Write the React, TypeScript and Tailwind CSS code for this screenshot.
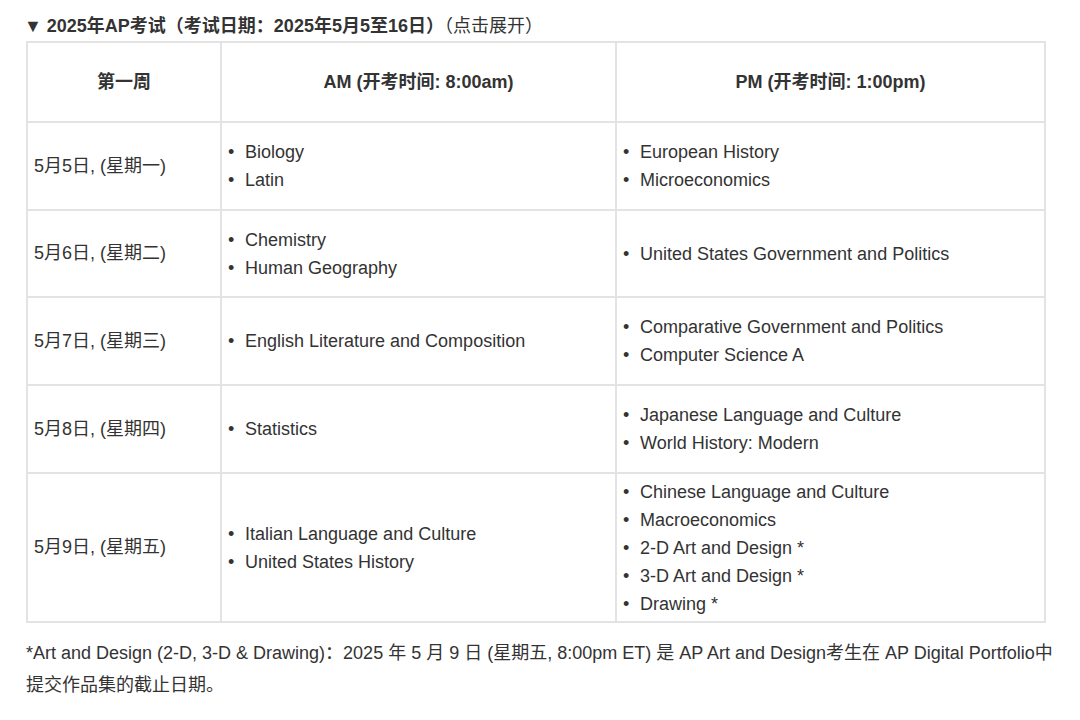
const rows: [string, string[], string[], string][] = [
  ['5月5日, (星期一)', ['Biology', 'Latin'], ['European History', 'Microeconomics'], 'h-[88px]'],
  ['5月6日, (星期二)', ['Chemistry', 'Human Geography'], ['United States Government and Politics'], 'h-[87px]'],
  ['5月7日, (星期三)', ['English Literature and Composition'], ['Comparative Government and Politics', 'Computer Science A'], 'h-[88px]'],
  ['5月8日, (星期四)', ['Statistics'], ['Japanese Language and Culture', 'World History: Modern'], 'h-[88px]'],
  ['5月9日, (星期五)', ['Italian Language and Culture', 'United States History'], ['Chinese Language and Culture', 'Macroeconomics', '2-D Art and Design *', '3-D Art and Design *', 'Drawing *'], 'h-[149px]'],
];

function List({ items }: { items: string[] }) {
  return (
    <ul>
      {items.map((t) => (
        <li key={t} className="flex leading-[28px]">
          <span className="w-[18px] shrink-0 pl-[1px]">•</span>
          {t}
        </li>
      ))}
    </ul>
  );
}

export default function App() {
  return (
    <div className="w-[1080px] h-[720px] bg-white text-[#333] text-[18px] px-[26px] pt-[12px] font-[Liberation_Sans,Noto_Sans_CJK_SC,sans-serif]">
      <div className="font-bold leading-[28px] -ml-[2px]">
        ▼ 2025年AP考试（考试日期：2025年5月5至16日）<span className="font-normal">（点击展开）</span>
      </div>
      <table className="w-[1020px] mt-[1px] border-collapse">
        <thead>
          <tr className="h-[80px] font-bold">
            <th className="w-[194px] border-2 border-[#e3e3e3]">第一周</th>
            <th className="w-[395px] border-2 border-[#e3e3e3]">AM (开考时间: 8:00am)</th>
            <th className="border-2 border-[#e3e3e3]">PM (开考时间: 1:00pm)</th>
          </tr>
        </thead>
        <tbody>
          {rows.map(([d, am, pm, h]) => (
            <tr key={d} className={h}>
              <td className="border-2 border-[#e3e3e3] pl-[6px]">{d}</td>
              <td className="border-2 border-[#e3e3e3] pl-[5px]"><List items={am} /></td>
              <td className="border-2 border-[#e3e3e3] pl-[5px]"><List items={pm} /></td>
            </tr>
          ))}
        </tbody>
      </table>
      <p className="mt-[14px] leading-[32px]">
        *Art and Design (2-D, 3-D &amp; Drawing)：2025 年 5 月 9 日 (星期五, 8:00pm ET) 是 AP Art and Design考生在 AP Digital Portfolio中提交作品集的截止日期。
      </p>
    </div>
  );
}
